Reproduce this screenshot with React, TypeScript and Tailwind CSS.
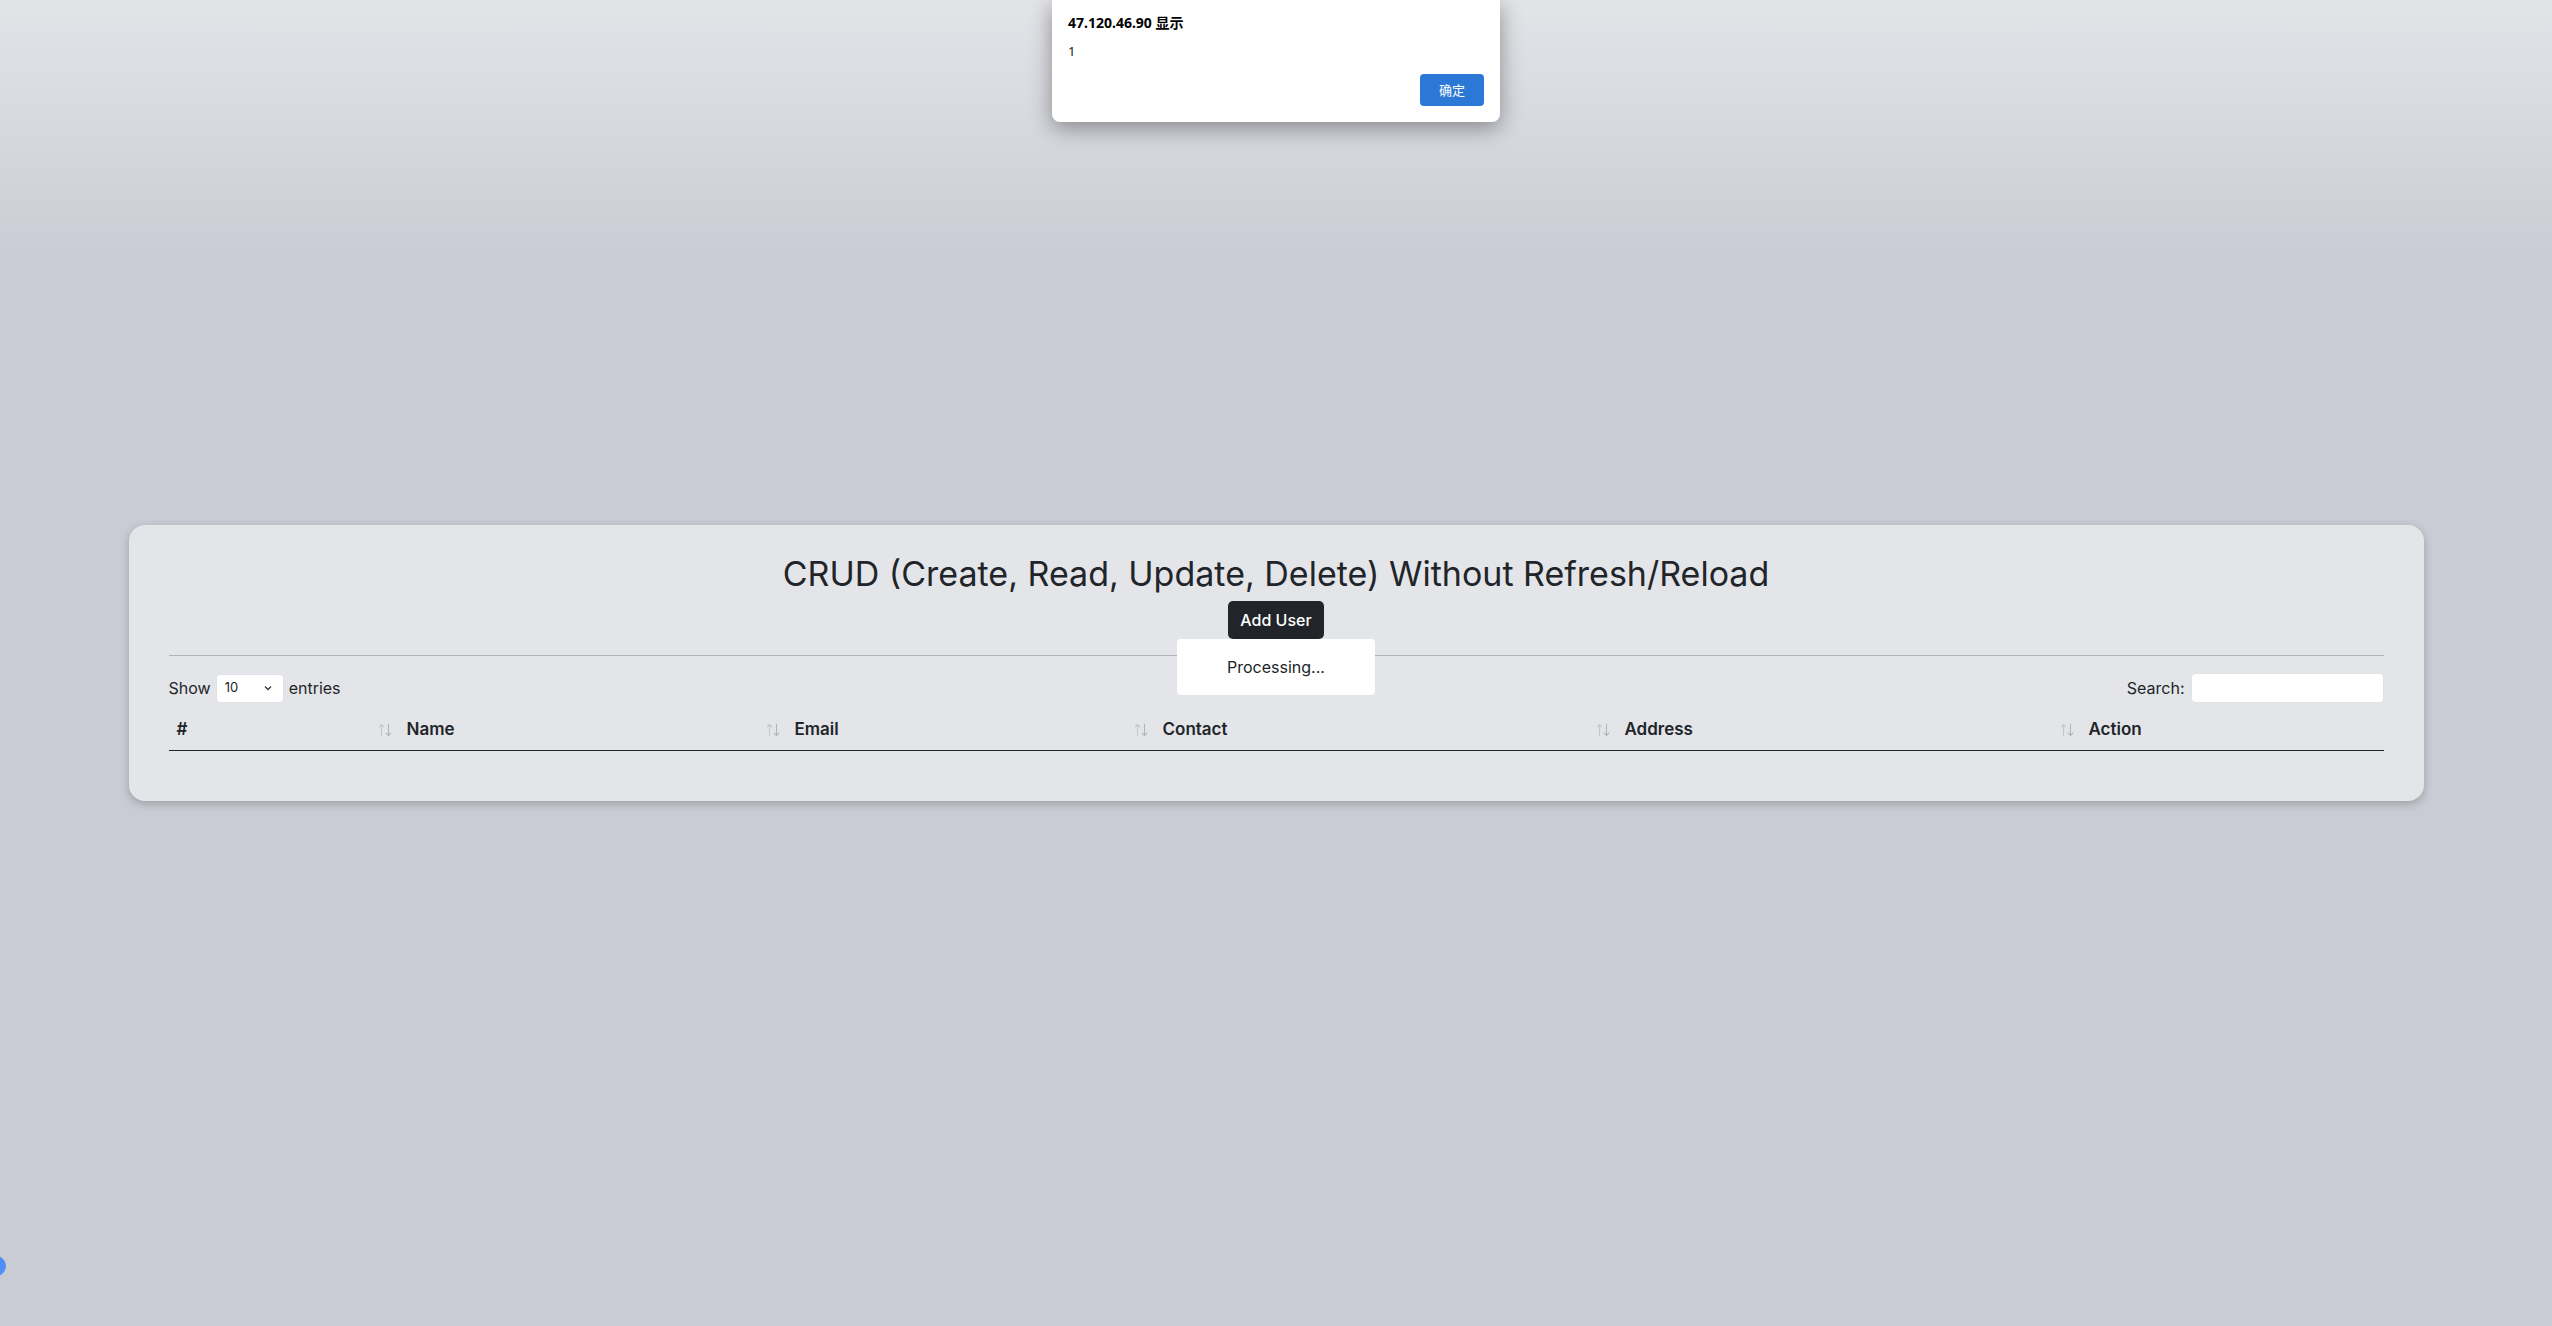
import React from "react";

const SortIcon = () => (
  <svg width="14" height="14" viewBox="0 0 14 14" fill="none" strokeWidth="1.1" strokeLinecap="round" strokeLinejoin="round">
    <g stroke="#c6c7cb">
      <path d="M3.5 13V1.5M1.2 3.8L3.5 1.5L5.8 3.8" />
    </g>
    <g stroke="#b4b5b9">
      <path d="M10.5 1v11.5M8.2 10.2l2.3 2.3 2.3-2.3" />
    </g>
  </svg>
);

const columns = [
  { label: "#", sort: true },
  { label: "Name", sort: true },
  { label: "Email", sort: true },
  { label: "Contact", sort: true },
  { label: "Address", sort: true },
  { label: "Action", sort: false },
];

export default function App() {
  return (
    <div
      className="relative min-h-screen w-full overflow-hidden bg-[#c9ccd4] bg-[linear-gradient(to_bottom,#e3e4e8_0px,#c9ccd4_266px)] text-[#212529] flex items-center justify-center"
      style={{ fontFamily: "Inter, 'Noto Sans', sans-serif" }}
    >
      {/* Browser alert dialog */}
      <div
        className="absolute top-0 left-1/2 -translate-x-1/2 w-[448px] h-[122px] bg-white rounded-b-[8px] shadow-[0_6px_22px_rgba(0,0,0,0.38)] px-4 pt-[14px] flex flex-col"
        style={{ fontFamily: "'Segoe UI', 'Noto Sans', 'Noto Sans CJK SC', sans-serif" }}
      >
        <div className="text-[14px] font-bold leading-[18px] text-black">47.120.46.90 显示</div>
        <div className="text-[13px] leading-[16px] text-[#202124] mt-[11px]">1</div>
        <div className="flex justify-end mt-[15px]">
          <button className="w-[64px] h-[32px] rounded-[4px] bg-[#2c78d6] text-white text-[13px]" style={{ fontFamily: "'Noto Sans CJK SC', sans-serif" }}>
            确定
          </button>
        </div>
      </div>

      {/* Card */}
      <div className="w-[2295px] bg-[#e4e5e9] rounded-[16px] shadow-[0_3px_10px_rgba(0,0,0,0.22)] px-[40px] pt-[29px] pb-[50px]">
        <h2 className="text-center text-[34px] leading-[40px] font-normal text-[#212529]">
          CRUD (Create, Read, Update, Delete) Without Refresh/Reload
        </h2>
        <div className="flex justify-center mt-[7px]">
          <button className="h-[38px] px-[12px] rounded-[5px] bg-[#212529] text-white text-[16px] font-medium">Add User</button>
        </div>
        <div className="h-px bg-[#b3b4b8] mt-[16px]" />

        <div className="relative">
          <div className="flex items-center justify-between mt-[17px] h-[30px] text-[16px]">
            <div className="flex items-center gap-[5px]">
              <span>Show</span>
              <div className="w-[68px] h-[29px] bg-white border border-[#dee2e6] rounded-[4px] flex items-center justify-between pl-[8px] pr-[10px] text-[13px]">
                <span>10</span>
                <svg width="10" height="10" viewBox="0 0 10 10" fill="none" stroke="#343a40" strokeWidth="1.3">
                  <path d="M2 3.5l3 3 3-3" />
                </svg>
              </div>
              <span>entries</span>
            </div>
            <div className="flex items-center gap-[6px]">
              <span>Search:</span>
              <div className="w-[193px] h-[30px] bg-white border border-[#dee2e6] rounded-[4px]" />
            </div>
          </div>

          <div className="mt-[7px] grid grid-cols-[230px_388px_368px_462px_464px_304px] border-b border-[#222529]">
            {columns.map((c) => (
              <div key={c.label} className="flex items-center justify-between h-[40px] pl-[8px] pr-[7px]">
                <span className="text-[17px] font-semibold text-[#212529]">{c.label}</span>
                {c.sort ? <SortIcon /> : null}
              </div>
            ))}
          </div>

          {/* Processing overlay */}
          <div className="absolute left-1/2 top-[-34px] -translate-x-1/2 w-[198px] h-[56px] bg-white rounded-[4px] flex items-center justify-center text-[16px] text-[#212529]">
            Processing...
          </div>
        </div>
      </div>

      {/* Blue dot */}
      <div className="absolute left-[-14px] top-[1256px] w-[20px] h-[20px] rounded-full bg-[#4d8ff6]" />
    </div>
  );
}
